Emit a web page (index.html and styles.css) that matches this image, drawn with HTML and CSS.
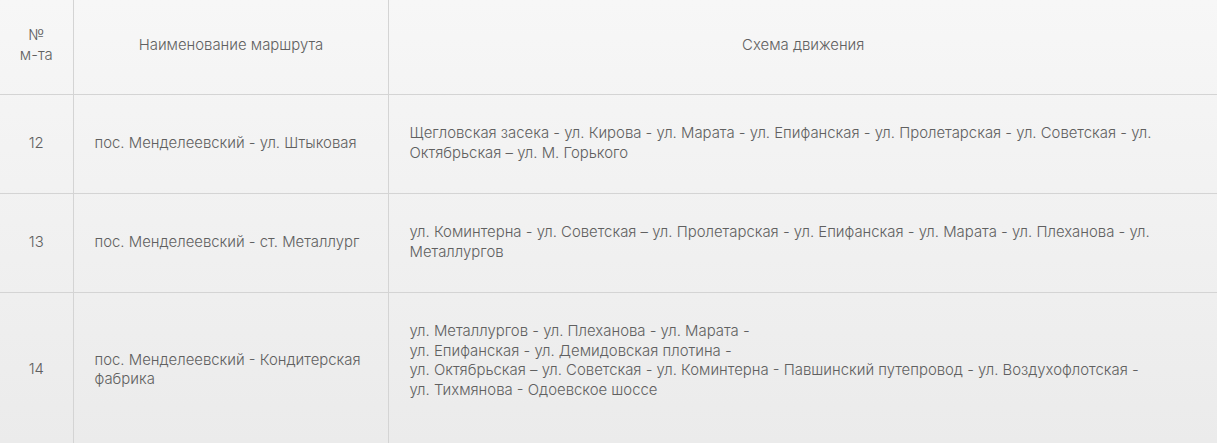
FILE: index.html
```html
<!DOCTYPE html>
<html lang="ru">
<head>
<meta charset="utf-8">
<title>Маршруты</title>
<link rel="stylesheet" href="styles.css">
</head>
<body>
<table class="routes">
  <colgroup>
    <col class="c-num">
    <col class="c-name">
    <col class="c-scheme">
  </colgroup>
  <thead>
    <tr class="head">
      <th class="num">№<br>м-та</th>
      <th>Наименование маршрута</th>
      <th>Схема движения</th>
    </tr>
  </thead>
  <tbody>
    <tr>
      <td class="num">12</td>
      <td>пос. Менделеевский - ул. Штыковая</td>
      <td>Щегловская засека - ул. Кирова - ул. Марата - ул. Епифанская - ул. Пролетарская - ул. Советская - ул. Октябрьская – ул. М. Горького</td>
    </tr>
    <tr>
      <td class="num">13</td>
      <td>пос. Менделеевский - ст. Металлург</td>
      <td>ул. Коминтерна - ул. Советская – ул. Пролетарская - ул. Епифанская - ул. Марата - ул. Плеханова - ул. Металлургов</td>
    </tr>
    <tr>
      <td class="num">14</td>
      <td>пос. Менделеевский - Кондитерская фабрика</td>
      <td><p class="scheme">ул. Металлургов - ул. Плеханова - ул. Марата -<br>ул. Епифанская - ул. Демидовская плотина -<br>ул. Октябрьская – ул. Советская - ул. Коминтерна - Павшинский путепровод - ул. Воздухофлотская -<br>ул. Тихмянова - Одоевское шоссе</p></td>
    </tr>
  </tbody>
</table>
</body>
</html>
```

FILE: styles.css
```css
html, body {
  margin: 0;
  padding: 0;
}
body {
  width: 1217px;
  min-height: 443px;
  background: linear-gradient(#f7f7f7 0px, #ebebeb 443px);
  font-family: "Inter", "Open Sans", "Liberation Sans", sans-serif;
  font-weight: 300;
  font-size: 14.9px;
  line-height: 19.5px;
  color: #606060;
  overflow: hidden;
}
.routes {
  width: 1217px;
  border-collapse: collapse;
  table-layout: fixed;
}
.c-num { width: 73px; }
.c-name { width: 315px; }
.routes th,
.routes td {
  padding: 29px 20px 30px 21px;
  vertical-align: middle;
  border-bottom: 1px solid #d4d4d4;
  border-right: 1px solid #d4d4d4;
  text-align: left;
}
.routes th:last-child,
.routes td:last-child {
  border-right: none;
}
.routes th {
  font-weight: 300;
  text-align: center;
  height: 39px;
  padding-top: 26px;
  padding-bottom: 29px;
}
.routes .num {
  text-align: center;
  padding-left: 4px;
  padding-right: 4px;
  white-space: nowrap;
}
.routes tbody td {
  height: 39px;
}
.scheme {
  margin: 0 0 18px;
}
```
